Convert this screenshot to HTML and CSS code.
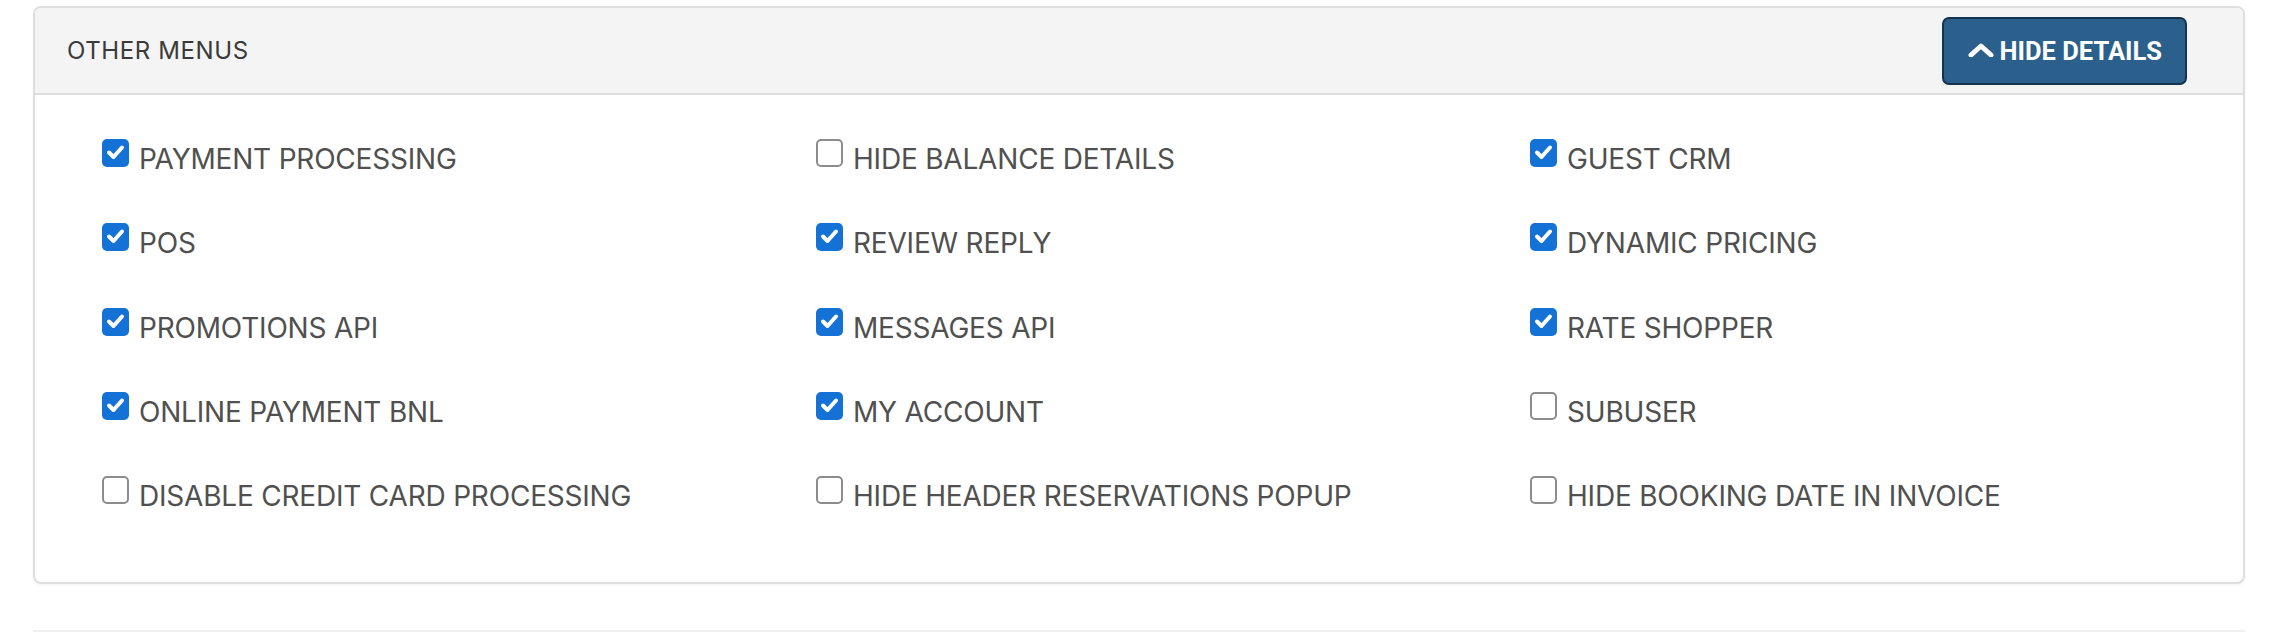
FILE: index.html
```html
<!DOCTYPE html>
<html lang="en">
<head>
<meta charset="utf-8">
<title>Other menus</title>
<link rel="stylesheet" href="styles.css">
</head>
<body>
<div class="page">
  <section class="card">
    <header class="card-head">
      <h2 class="card-title">OTHER MENUS</h2>
      <button class="btn-hide" type="button">
        <svg class="chev" viewBox="0 0 26 14" width="26" height="14" aria-hidden="true"><polyline points="3,12 13,3 23,12" fill="none" stroke="#fff" stroke-width="5" stroke-linecap="round" stroke-linejoin="round"/></svg>
        <span>HIDE DETAILS</span>
      </button>
    </header>
    <div class="card-body">
      <label class="opt"><span class="cb on"><svg viewBox="0 0 27 27"><polyline points="7,13.5 11.5,18 20,8.5" fill="none" stroke="#fff" stroke-width="4" stroke-linecap="round" stroke-linejoin="round"/></svg></span><span class="txt">PAYMENT PROCESSING</span></label>
      <label class="opt"><span class="cb"></span><span class="txt">HIDE BALANCE DETAILS</span></label>
      <label class="opt"><span class="cb on"><svg viewBox="0 0 27 27"><polyline points="7,13.5 11.5,18 20,8.5" fill="none" stroke="#fff" stroke-width="4" stroke-linecap="round" stroke-linejoin="round"/></svg></span><span class="txt">GUEST CRM</span></label>

      <label class="opt"><span class="cb on"><svg viewBox="0 0 27 27"><polyline points="7,13.5 11.5,18 20,8.5" fill="none" stroke="#fff" stroke-width="4" stroke-linecap="round" stroke-linejoin="round"/></svg></span><span class="txt">POS</span></label>
      <label class="opt"><span class="cb on"><svg viewBox="0 0 27 27"><polyline points="7,13.5 11.5,18 20,8.5" fill="none" stroke="#fff" stroke-width="4" stroke-linecap="round" stroke-linejoin="round"/></svg></span><span class="txt">REVIEW REPLY</span></label>
      <label class="opt"><span class="cb on"><svg viewBox="0 0 27 27"><polyline points="7,13.5 11.5,18 20,8.5" fill="none" stroke="#fff" stroke-width="4" stroke-linecap="round" stroke-linejoin="round"/></svg></span><span class="txt">DYNAMIC PRICING</span></label>

      <label class="opt"><span class="cb on"><svg viewBox="0 0 27 27"><polyline points="7,13.5 11.5,18 20,8.5" fill="none" stroke="#fff" stroke-width="4" stroke-linecap="round" stroke-linejoin="round"/></svg></span><span class="txt">PROMOTIONS API</span></label>
      <label class="opt"><span class="cb on"><svg viewBox="0 0 27 27"><polyline points="7,13.5 11.5,18 20,8.5" fill="none" stroke="#fff" stroke-width="4" stroke-linecap="round" stroke-linejoin="round"/></svg></span><span class="txt">MESSAGES API</span></label>
      <label class="opt"><span class="cb on"><svg viewBox="0 0 27 27"><polyline points="7,13.5 11.5,18 20,8.5" fill="none" stroke="#fff" stroke-width="4" stroke-linecap="round" stroke-linejoin="round"/></svg></span><span class="txt">RATE SHOPPER</span></label>

      <label class="opt"><span class="cb on"><svg viewBox="0 0 27 27"><polyline points="7,13.5 11.5,18 20,8.5" fill="none" stroke="#fff" stroke-width="4" stroke-linecap="round" stroke-linejoin="round"/></svg></span><span class="txt">ONLINE PAYMENT BNL</span></label>
      <label class="opt"><span class="cb on"><svg viewBox="0 0 27 27"><polyline points="7,13.5 11.5,18 20,8.5" fill="none" stroke="#fff" stroke-width="4" stroke-linecap="round" stroke-linejoin="round"/></svg></span><span class="txt">MY ACCOUNT</span></label>
      <label class="opt"><span class="cb"></span><span class="txt">SUBUSER</span></label>

      <label class="opt"><span class="cb"></span><span class="txt">DISABLE CREDIT CARD PROCESSING</span></label>
      <label class="opt"><span class="cb"></span><span class="txt">HIDE HEADER RESERVATIONS POPUP</span></label>
      <label class="opt"><span class="cb"></span><span class="txt">HIDE BOOKING DATE IN INVOICE</span></label>
    </div>
  </section>
  <div class="next-rule"></div>
</div>
</body>
</html>
```

FILE: styles.css
```css
* { box-sizing: border-box; }

html, body {
  margin: 0;
  padding: 0;
  background: #ffffff;
}

.page {
  padding: 6px 33px 0 33px;
  font-family: Inter, "Noto Sans", sans-serif;
}

.card {
  border: 2px solid #dedede;
  border-radius: 8px;
  background: #ffffff;
  box-shadow: 0 2px 3px rgba(0, 0, 0, 0.04);
  overflow: hidden;
}

.card-head {
  display: flex;
  align-items: center;
  justify-content: space-between;
  height: 87px;
  padding: 0 56px 0 32px;
  background: #f4f4f4;
  border-bottom: 2px solid #dedede;
}

.card-title {
  margin: 0;
  font-size: 24px;
  font-weight: 400;
  letter-spacing: 0.6px;
  color: #3a3a3a;
}

.btn-hide {
  display: flex;
  align-items: center;
  gap: 6px;
  height: 68px;
  padding: 0 23px 0 24px;
  background: #2b5f8c;
  border: 2px solid #15344f;
  border-radius: 7px;
  color: #ffffff;
  font-family: Roboto, "Liberation Sans", sans-serif;
  font-size: 25.5px;
  font-weight: 700;
  letter-spacing: 0;
  cursor: pointer;
}

.chev {
  display: block;
  width: 26px;
  height: 14px;
  margin-top: -2px;
}

.card-body {
  display: grid;
  grid-template-columns: 714px 714px 1fr;
  grid-auto-rows: 84.25px;
  padding: 44px 0 22px 67px;
}

.opt {
  display: flex;
  align-items: flex-start;
  gap: 10px;
  cursor: pointer;
}

.cb {
  flex: none;
  width: 27px;
  height: 28px;
  border: 2px solid #8c8c8c;
  border-radius: 5px;
  background: #ffffff;
}

.cb.on {
  border: none;
  background: #1471d6;
}

.cb svg {
  display: block;
  width: 27px;
  height: 27px;
}

.txt {
  margin-top: 3px;
  font-size: 28px;
  line-height: 34px;
  font-weight: 400;
  color: #505050;
  letter-spacing: -0.2px;
}

.next-rule {
  margin-top: 46px;
  border-top: 2px solid #f0f0f0;
}
```
